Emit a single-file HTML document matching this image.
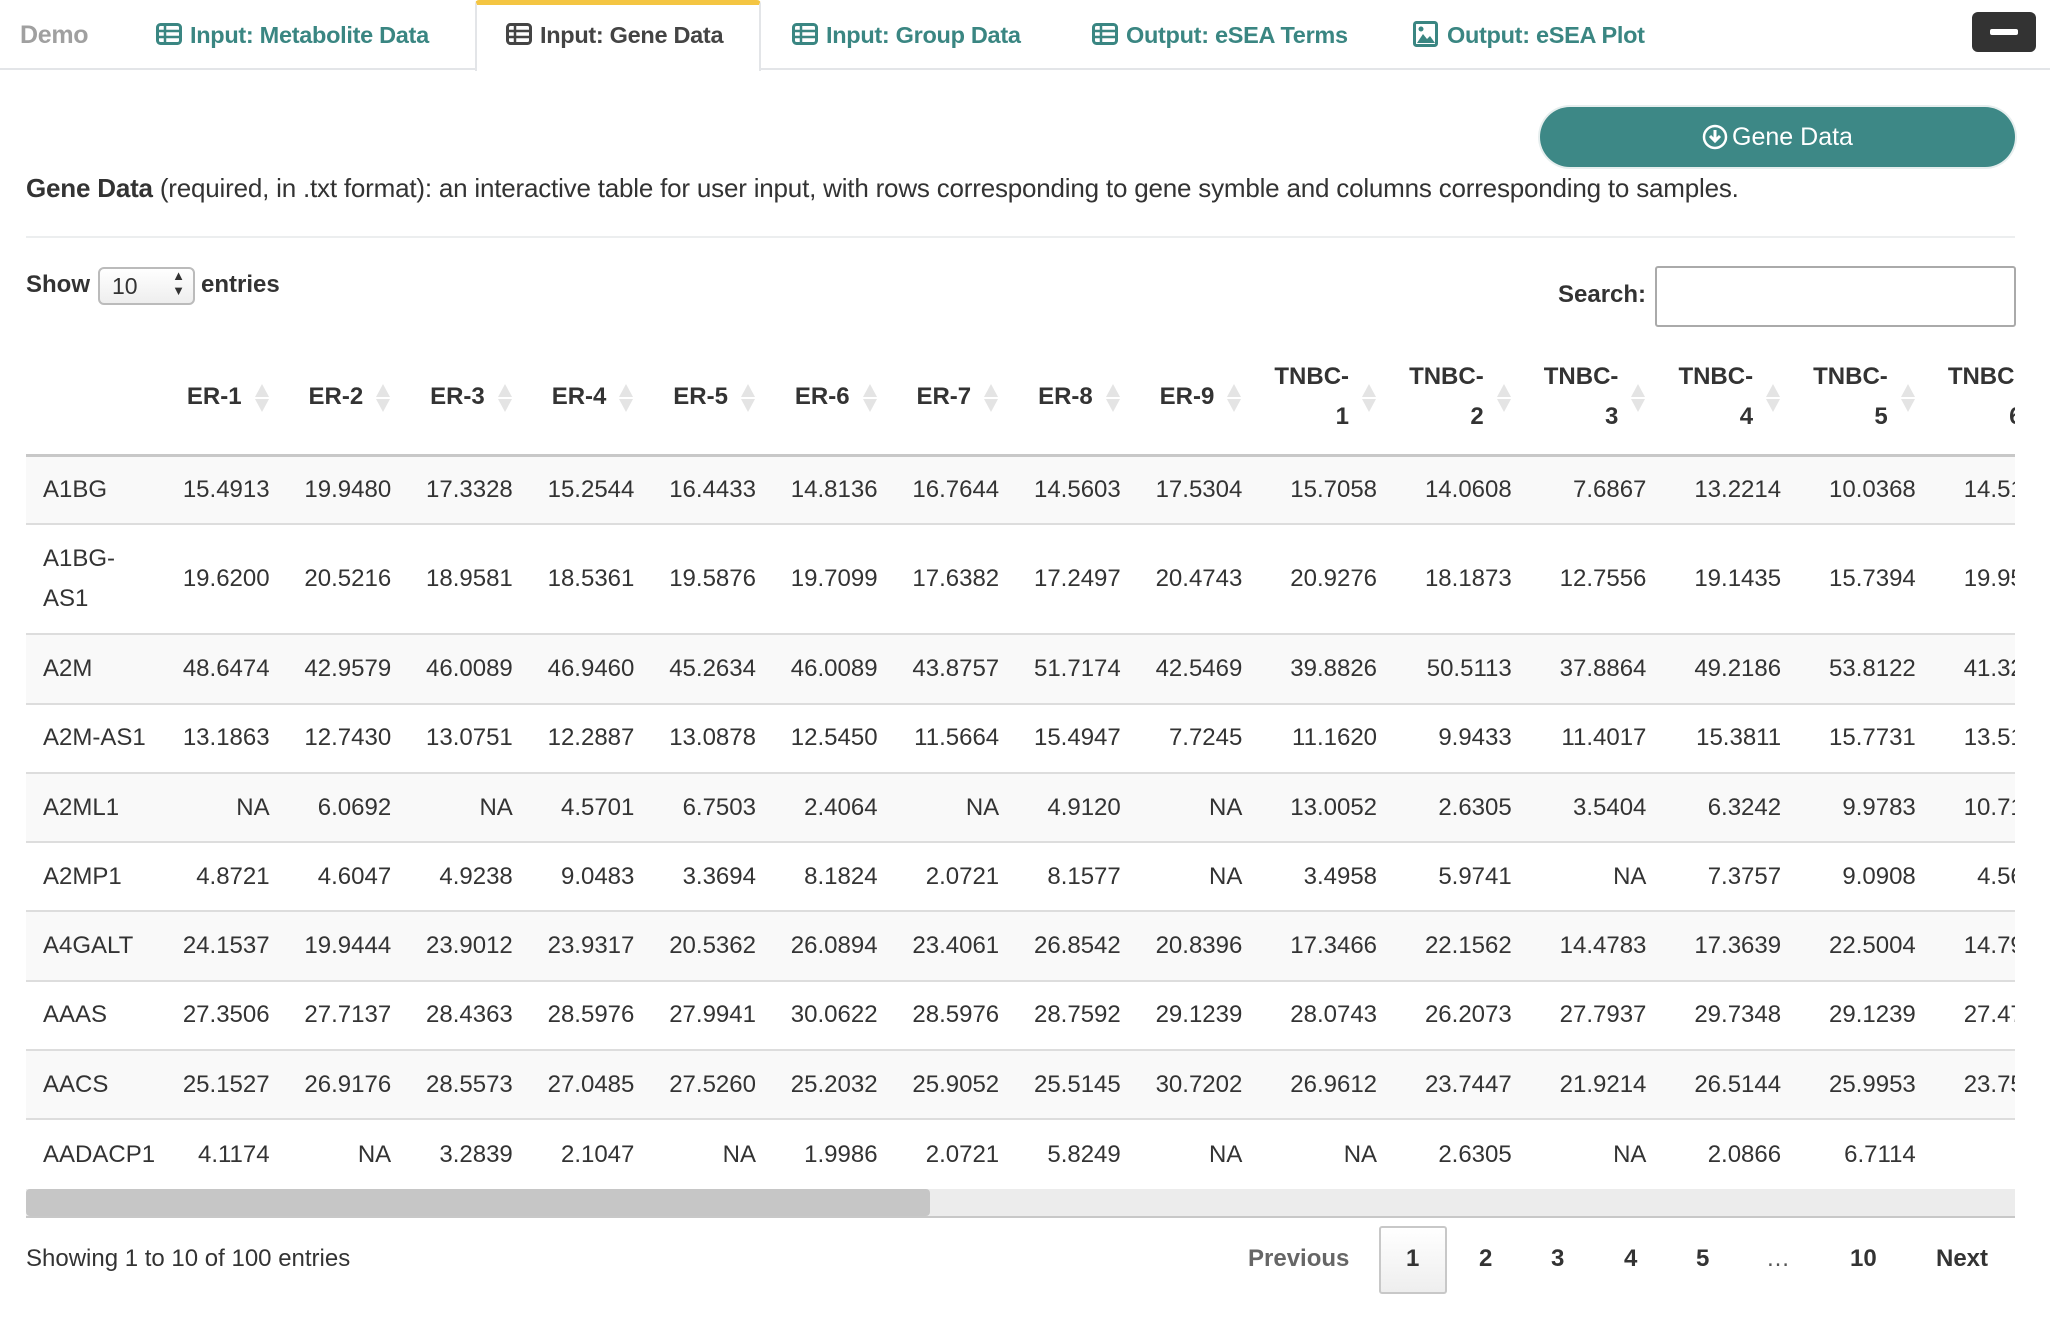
<!DOCTYPE html>
<html><head><meta charset="utf-8">
<style>
*{box-sizing:border-box;margin:0;padding:0}
body{width:2050px;height:1328px;background:#fff;font-family:"Liberation Sans",sans-serif;color:#333;position:relative;overflow:hidden}
.abs{position:absolute}
.tab{position:absolute;top:22px;font-size:23.5px;font-weight:bold;color:#3a8682;white-space:nowrap;line-height:26px;letter-spacing:-0.3px}
.tab svg{position:absolute;left:-34px;top:1px}
.tabline{position:absolute;left:0;top:68px;width:2050px;height:2px;background:#e3e5e8}
.active{position:absolute;left:475px;top:0;width:286px;height:71px;background:#fff;border:2px solid #e3e5e8;border-bottom:none;border-top:5px solid #f4c542;border-radius:4px 4px 0 0}
.minus{position:absolute;left:1972px;top:12px;width:64px;height:40px;background:#333;border-radius:6px}
.minus:after{content:"";position:absolute;left:18px;top:17px;width:28px;height:6px;background:#fff;border-radius:2px}
.btn{position:absolute;left:1540px;top:107px;width:475px;height:60px;background:#3d8886;border-radius:30px;color:#fff;font-size:25px;text-align:center;line-height:60px;box-shadow:0 0 0 2px #e6eeee}
.desc{position:absolute;left:26px;top:173px;font-size:26px;white-space:nowrap;letter-spacing:-0.2px}
.hr{position:absolute;left:26px;top:236px;width:1989px;height:2px;background:#eceeef}
.lbl{font-size:24px;font-weight:bold;position:absolute}
.sel{position:absolute;left:98px;top:267px;width:97px;height:38px;border:2px solid #bbb;border-radius:6px;background:linear-gradient(#fff,#eee);font-size:23px;padding-left:12px;line-height:34px}
.srch{position:absolute;left:1655px;top:266px;width:361px;height:61px;border:2px solid #aaa;border-radius:3px}
.wrap{position:absolute;left:26px;top:340px;width:1989px;height:850px;overflow:hidden}
table{border-collapse:collapse;table-layout:fixed;width:2041px;font-size:24px}
th{height:115px;font-weight:bold;text-align:right;padding:0 45px 0 4px;position:relative;border-bottom:3px solid #c8c8c8;line-height:40px;vertical-align:middle}
th .s{position:absolute;right:18px;top:44px}
td{text-align:right;padding:0 17px;border-top:2px solid #ddd;height:69.3px;white-space:nowrap;overflow:hidden}
td:first-child{text-align:left}
tr.o td{background:#f9f9f9}
tr.tall td{height:110px;line-height:40px;white-space:normal}
.sb{position:absolute;left:26px;top:1189px;width:1989px;height:29px;background:#ececec;border-bottom:2px solid #c8c8c8}
.sb div{position:absolute;left:0;top:0;width:904px;height:27px;background:#c6c6c6;border-radius:4px}
.pg{position:absolute;top:1245px;font-size:24px;font-weight:bold;color:#333}
</style></head><body>
<div class="tabline"></div>
<div class="active"></div>
<div class="tab" style="left:20px;color:#a0a0a0;font-size:25px">Demo</div>
<svg width="0" height="0" style="position:absolute"><defs><symbol id="t" viewBox="0 0 26 22"><rect x="1.5" y="1.5" width="23" height="19" rx="3" fill="none" stroke="currentColor" stroke-width="3"/><path d="M1 8h24M1 14h24M9 2v18" stroke="currentColor" stroke-width="2.5"/></symbol><symbol id="s" viewBox="0 0 14 28"><path d="M7 0L14 13H0zM7 28L14 15H0z" fill="#e4e4e4"/></symbol></defs></svg>
<div class="tab" style="left:190px"><svg width="26" height="22"><use href="#t"/></svg>Input: Metabolite Data</div>
<div class="tab" style="left:540px;color:#444"><svg width="26" height="22"><use href="#t"/></svg>Input: Gene Data</div>
<div class="tab" style="left:826px"><svg width="26" height="22"><use href="#t"/></svg>Input: Group Data</div>
<div class="tab" style="left:1126px"><svg width="26" height="22"><use href="#t"/></svg>Output: eSEA Terms</div>
<div class="tab" style="left:1447px"><svg width="26" height="26" viewBox="0 0 26 26" style="top:-1px"><rect x="1.5" y="1.5" width="22" height="23" rx="2" fill="none" stroke="currentColor" stroke-width="3"/><path d="M4 22l6-9 4 5 3-3 5 7z" fill="currentColor"/><circle cx="8" cy="8" r="2.5" fill="currentColor"/></svg>Output: eSEA Plot</div>
<div class="minus"></div>
<div class="btn"><svg width="26" height="26" viewBox="0 0 26 26" style="vertical-align:-5px;margin-right:4px"><circle cx="13" cy="13" r="11" fill="none" stroke="#fff" stroke-width="2.5"/><path d="M13 6v11M8 12l5 5 5-5" stroke="#fff" stroke-width="3" fill="none"/></svg>Gene Data</div>
<div class="desc"><b>Gene Data</b> (required, in .txt format): an interactive table for user input, with rows corresponding to gene symble and columns corresponding to samples.</div>
<div class="hr"></div>
<div class="lbl" style="left:26px;top:271px">Show</div>
<div class="sel">10<span style="position:absolute;right:8px;top:-1px;font-size:13px;line-height:15px">▲<br>▼</span></div>
<div class="lbl" style="left:201px;top:271px">entries</div>
<div class="lbl" style="left:1558px;top:281px">Search:</div>
<div class="srch"></div>
<div class="wrap"><table>
<colgroup><col style="width:139px"><col span="9" style="width:121.6px"><col span="6" style="width:134.7px"></colgroup>
<thead><tr><th></th>
<th>ER-1<svg class="s" width="14" height="28"><use href="#s"/></svg></th>
<th>ER-2<svg class="s" width="14" height="28"><use href="#s"/></svg></th>
<th>ER-3<svg class="s" width="14" height="28"><use href="#s"/></svg></th>
<th>ER-4<svg class="s" width="14" height="28"><use href="#s"/></svg></th>
<th>ER-5<svg class="s" width="14" height="28"><use href="#s"/></svg></th>
<th>ER-6<svg class="s" width="14" height="28"><use href="#s"/></svg></th>
<th>ER-7<svg class="s" width="14" height="28"><use href="#s"/></svg></th>
<th>ER-8<svg class="s" width="14" height="28"><use href="#s"/></svg></th>
<th>ER-9<svg class="s" width="14" height="28"><use href="#s"/></svg></th>
<th>TNBC-<br>1<svg class="s" width="14" height="28"><use href="#s"/></svg></th>
<th>TNBC-<br>2<svg class="s" width="14" height="28"><use href="#s"/></svg></th>
<th>TNBC-<br>3<svg class="s" width="14" height="28"><use href="#s"/></svg></th>
<th>TNBC-<br>4<svg class="s" width="14" height="28"><use href="#s"/></svg></th>
<th>TNBC-<br>5<svg class="s" width="14" height="28"><use href="#s"/></svg></th>
<th>TNBC-<br>6<svg class="s" width="14" height="28"><use href="#s"/></svg></th>
</tr></thead>
<tbody>
<tr class="o"><td>A1BG</td><td>15.4913</td><td>19.9480</td><td>17.3328</td><td>15.2544</td><td>16.4433</td><td>14.8136</td><td>16.7644</td><td>14.5603</td><td>17.5304</td><td>15.7058</td><td>14.0608</td><td>7.6867</td><td>13.2214</td><td>10.0368</td><td>14.5152</td></tr>
<tr class="tall"><td>A1BG-<br>AS1</td><td>19.6200</td><td>20.5216</td><td>18.9581</td><td>18.5361</td><td>19.5876</td><td>19.7099</td><td>17.6382</td><td>17.2497</td><td>20.4743</td><td>20.9276</td><td>18.1873</td><td>12.7556</td><td>19.1435</td><td>15.7394</td><td>19.9512</td></tr>
<tr class="o"><td>A2M</td><td>48.6474</td><td>42.9579</td><td>46.0089</td><td>46.9460</td><td>45.2634</td><td>46.0089</td><td>43.8757</td><td>51.7174</td><td>42.5469</td><td>39.8826</td><td>50.5113</td><td>37.8864</td><td>49.2186</td><td>53.8122</td><td>41.3214</td></tr>
<tr><td>A2M-AS1</td><td>13.1863</td><td>12.7430</td><td>13.0751</td><td>12.2887</td><td>13.0878</td><td>12.5450</td><td>11.5664</td><td>15.4947</td><td>7.7245</td><td>11.1620</td><td>9.9433</td><td>11.4017</td><td>15.3811</td><td>15.7731</td><td>13.5122</td></tr>
<tr class="o"><td>A2ML1</td><td>NA</td><td>6.0692</td><td>NA</td><td>4.5701</td><td>6.7503</td><td>2.4064</td><td>NA</td><td>4.9120</td><td>NA</td><td>13.0052</td><td>2.6305</td><td>3.5404</td><td>6.3242</td><td>9.9783</td><td>10.7122</td></tr>
<tr><td>A2MP1</td><td>4.8721</td><td>4.6047</td><td>4.9238</td><td>9.0483</td><td>3.3694</td><td>8.1824</td><td>2.0721</td><td>8.1577</td><td>NA</td><td>3.4958</td><td>5.9741</td><td>NA</td><td>7.3757</td><td>9.0908</td><td>4.5612</td></tr>
<tr class="o"><td>A4GALT</td><td>24.1537</td><td>19.9444</td><td>23.9012</td><td>23.9317</td><td>20.5362</td><td>26.0894</td><td>23.4061</td><td>26.8542</td><td>20.8396</td><td>17.3466</td><td>22.1562</td><td>14.4783</td><td>17.3639</td><td>22.5004</td><td>14.7912</td></tr>
<tr><td>AAAS</td><td>27.3506</td><td>27.7137</td><td>28.4363</td><td>28.5976</td><td>27.9941</td><td>30.0622</td><td>28.5976</td><td>28.7592</td><td>29.1239</td><td>28.0743</td><td>26.2073</td><td>27.7937</td><td>29.7348</td><td>29.1239</td><td>27.4712</td></tr>
<tr class="o"><td>AACS</td><td>25.1527</td><td>26.9176</td><td>28.5573</td><td>27.0485</td><td>27.5260</td><td>25.2032</td><td>25.9052</td><td>25.5145</td><td>30.7202</td><td>26.9612</td><td>23.7447</td><td>21.9214</td><td>26.5144</td><td>25.9953</td><td>23.7512</td></tr>
<tr><td>AADACP1</td><td>4.1174</td><td>NA</td><td>3.2839</td><td>2.1047</td><td>NA</td><td>1.9986</td><td>2.0721</td><td>5.8249</td><td>NA</td><td>NA</td><td>2.6305</td><td>NA</td><td>2.0866</td><td>6.7114</td><td></td></tr>
</tbody></table></div>
<div class="sb"><div></div></div>
<div class="abs" style="left:26px;top:1245px;font-size:24px">Showing 1 to 10 of 100 entries</div>
<div class="pg" style="left:1248px;color:#666">Previous</div>
<div class="abs" style="left:1379px;top:1226px;width:68px;height:68px;border:2px solid #c8c8c8;border-radius:3px;background:linear-gradient(#fff,#eee)"></div>
<div class="pg" style="left:1406px">1</div>
<div class="pg" style="left:1479px">2</div>
<div class="pg" style="left:1551px">3</div>
<div class="pg" style="left:1624px">4</div>
<div class="pg" style="left:1696px">5</div>
<div class="pg" style="left:1766px;font-weight:normal;color:#555">…</div>
<div class="pg" style="left:1850px">10</div>
<div class="pg" style="left:1936px">Next</div>
</body></html>
